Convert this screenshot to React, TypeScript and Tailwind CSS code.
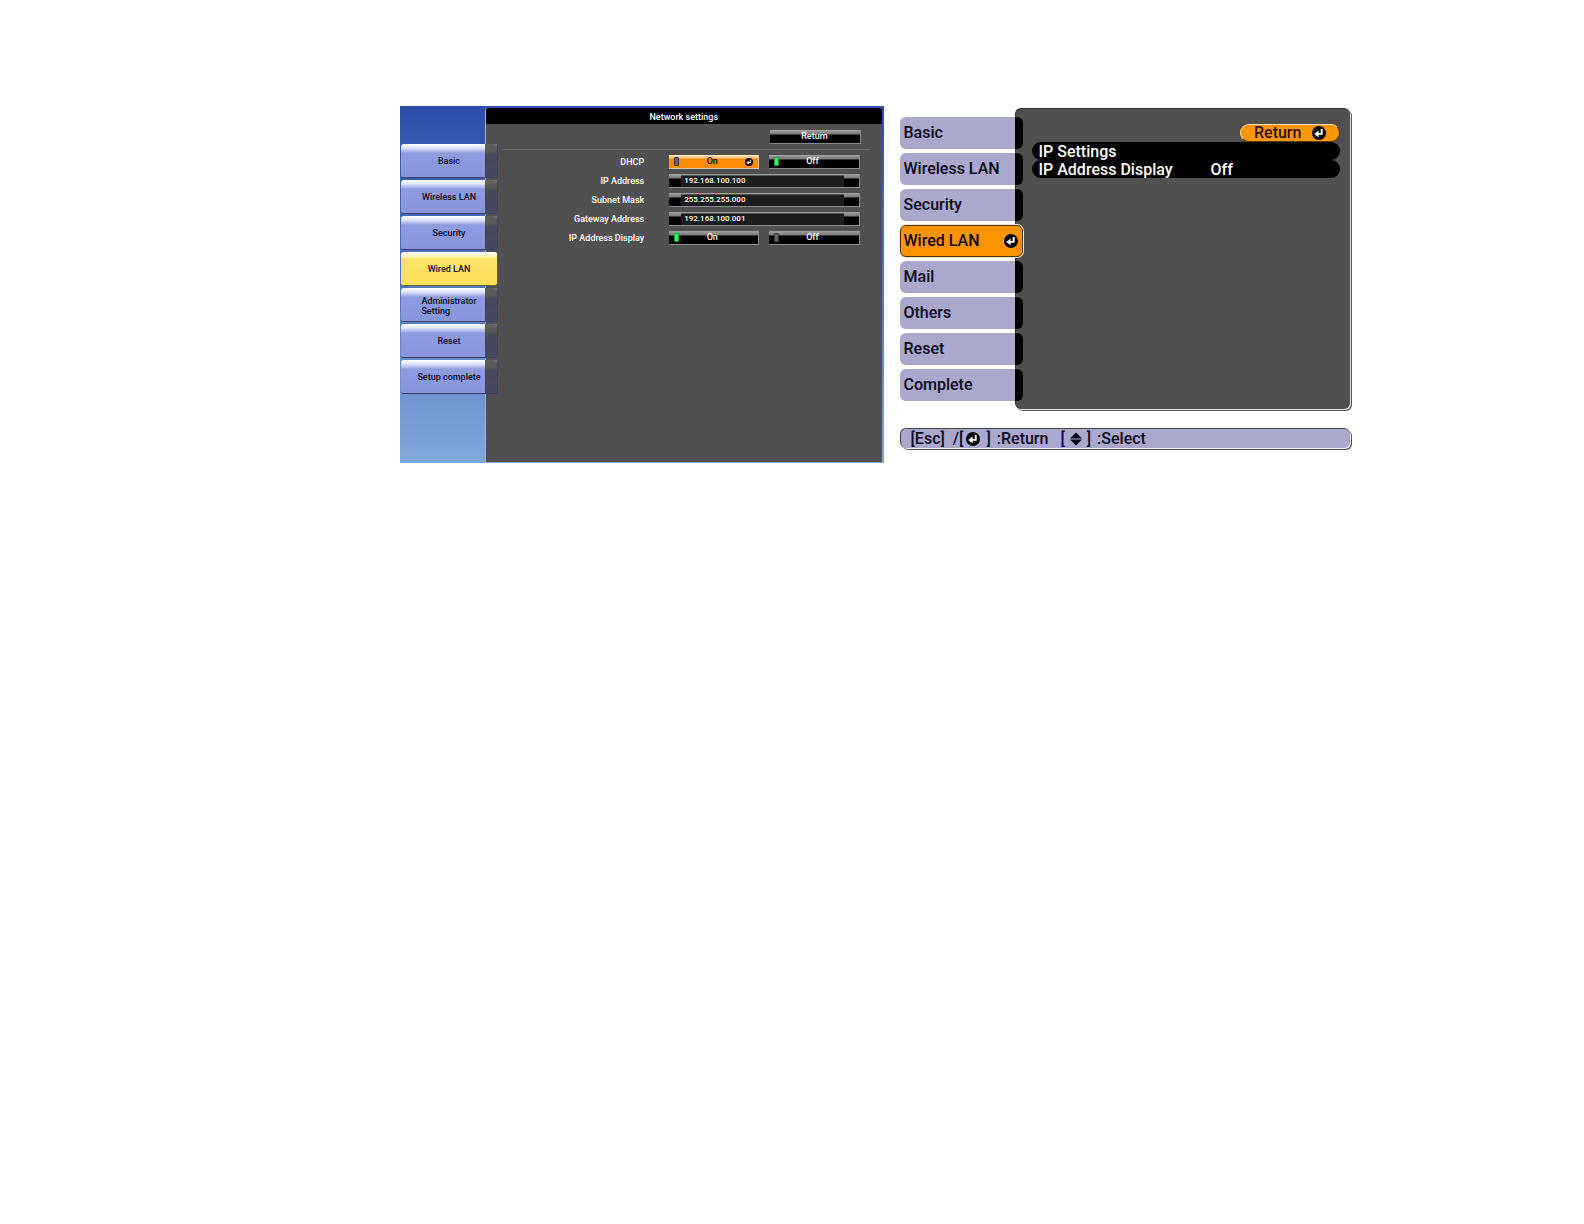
import clsx from "clsx";

type Tab = {
  label: string;
  sub?: string;
};

const projectorTabs: Tab[] = [
  { label: "Basic" },
  { label: "Wireless LAN" },
  { label: "Security" },
  { label: "Wired LAN" },
  { label: "Administrator", sub: "Setting" },
  { label: "Reset" },
  { label: "Setup complete" },
];

const menuTabs = [
  "Basic",
  "Wireless LAN",
  "Security",
  "Wired LAN",
  "Mail",
  "Others",
  "Reset",
  "Complete",
];

const addressFields = [
  { id: "ip", label: "IP Address", value: "192.168.100.100" },
  { id: "subnet", label: "Subnet Mask", value: "255.255.255.000" },
  { id: "gateway", label: "Gateway Address", value: "192.168.100.001" },
];

const glossy =
  "border-r border-b border-[#8c8c8c] bg-[linear-gradient(to_bottom,#a5a5a5_0px,#777_4px,#000_5px)]";

function EnterIcon({ className }: { className?: string }) {
  return (
    <svg viewBox="0 0 14 14" className={className} aria-hidden="true">
      <circle cx="7" cy="7" r="7" fill="#050505" />
      <path d="M9.7 3v4.9H5.5" fill="none" stroke="#fff" strokeWidth="1.9" />
      <path d="M2.2 7.9 6.6 4.6v6.6z" fill="#fff" />
    </svg>
  );
}

function UpDownIcon() {
  return (
    <svg viewBox="0 0 14 14" className="size-3.5" aria-hidden="true">
      <path d="M7 0.5 13 6.4H1z" fill="#080820" />
      <path d="M7 13.5 1 7.6h12z" fill="#080820" />
    </svg>
  );
}

type OptionProps = {
  name: string;
  label: string;
  checked?: boolean;
  focused?: boolean;
};

function Option({ name, label, checked, focused }: OptionProps) {
  return (
    <label
      className={clsx(
        "flex h-[14px] flex-1 items-center px-[5px] text-[9px] leading-none",
        focused
          ? "border-r border-b border-[#d8c9b0] bg-[linear-gradient(to_bottom,#fff0c8_0px,#f5c07a_3px,#ff8a0c_4px,#ff8a0c)] text-black"
          : clsx(glossy, "text-white"),
      )}
    >
      <input
        type="radio"
        name={name}
        defaultChecked={checked}
        className="h-[9px] w-[5px] appearance-none rounded-[1px] border border-[#333] bg-[#666] checked:border-[#0aa52a] checked:bg-[#3df25c]"
      />
      <span className="flex-1 text-center font-medium">{label}</span>
      {focused ? <EnterIcon className="size-2" /> : <span className="w-2" />}
    </label>
  );
}

type OptionRowProps = {
  name: string;
  label: string;
  value: "On" | "Off";
  focused?: boolean;
};

function OptionRow({ name, label, value, focused }: OptionRowProps) {
  return (
    <>
      <span id={name} className="text-right">
        {label}
      </span>
      <div role="radiogroup" aria-labelledby={name} className="flex gap-[10px]">
        <Option name={name} label="On" checked={value === "On"} focused={focused} />
        <Option name={name} label="Off" checked={value === "Off"} />
      </div>
    </>
  );
}

function ProjectorTab({ label, sub, active }: Tab & { active: boolean }) {
  return (
    <button
      type="button"
      className={clsx(
        "relative flex h-[34px] w-full items-center justify-center overflow-hidden rounded-[3px] border-r border-b pt-[2px] text-[9px] leading-[11px] font-medium text-[#0a0a28]",
        active
          ? "border-[#6b6330] bg-[linear-gradient(to_bottom,#fff_0px,#fff7c0_4px,#fde467_7px,#fbe05c)]"
          : "border-[#3c4168] bg-[linear-gradient(to_bottom,#fff_0px,#dfe4fb_4px,#909be0_9px,#8895dc)]",
      )}
    >
      {!active && (
        <span className="absolute inset-y-0 right-0 w-3 bg-[linear-gradient(to_bottom,#626262_0px,#555_8px,#47475a_11px,#474760)]" />
      )}
      <span className="text-left">
        {label}
        {sub && <span className="block leading-[9px]">{sub}</span>}
      </span>
    </button>
  );
}

function ProjectorPanel() {
  return (
    <section className="flex min-h-[357px] bg-linear-to-b from-[#2c50aa] via-[#5276bd] to-[#80a8da] pt-[2px] pr-[2px] pb-px">
      <nav className="relative z-10 w-[86px] shrink-0 pt-9 pl-px">
        <div className="flex w-[97px] flex-col gap-[2px]">
          {projectorTabs.map((tab) => (
            <ProjectorTab key={tab.label} {...tab} active={tab.label === "Wired LAN"} />
          ))}
        </div>
      </nav>

      <div className="flex-1 rounded-t-[3px] bg-[#505050] text-[9px] font-medium text-white shadow-[-1px_0_0_#a0b4da]">
        <h1 className="h-4 rounded-t-[3px] bg-black text-center leading-[18px]">
          Network settings
        </h1>
        <div className="flex justify-end pt-[6px] pr-[21px]">
          <button
            type="button"
            className={clsx(glossy, "h-[14px] w-[91px] leading-[13px]")}
          >
            Return
          </button>
        </div>
        <hr className="mt-[5px] mr-3 ml-4 border-[#6c6c6c]" />
        <form className="mt-[5px] grid grid-cols-[158fr_190fr] items-center gap-x-[25px] gap-y-[5px] pr-[22px] leading-[14px]">
          <OptionRow name="dhcp" label="DHCP" value="Off" focused />
          {addressFields.map(({ id, label, value }) => (
            <div key={id} className="contents">
              <label htmlFor={id} className="text-right">
                {label}
              </label>
              <div className={clsx(glossy, "flex h-[14px] pr-[15px] pl-3")}>
                <input
                  id={id}
                  defaultValue={value}
                  className="mt-px w-full min-w-0 border-t border-[#555] bg-[#1c1c1c] px-[3px] pb-[2px] text-[8px] leading-none text-white"
                />
              </div>
            </div>
          ))}
          <OptionRow name="ip-display" label="IP Address Display" value="On" />
        </form>
      </div>
    </section>
  );
}

function MenuTab({ label, active }: { label: string; active: boolean }) {
  return (
    <button
      type="button"
      className={clsx(
        "flex h-8 w-full items-center justify-between rounded-md pr-1 text-left text-[#080820]",
        active
          ? "border border-[#4a3510] bg-[#fe9400] pl-[3px] shadow-[0_0_0_1px_#f5e3c0]"
          : "bg-[linear-gradient(to_right,#aaa8cc_115px,#000_115px)] pl-1",
      )}
    >
      {label}
      {active && <EnterIcon className="size-3.5" />}
    </button>
  );
}

function MenuPanel() {
  return (
    <section className="pt-[2px] text-base leading-5 font-medium">
      <div className="flex">
        <nav className="relative z-10 w-[115px] shrink-0 pt-[9px]">
          <div className="flex w-[123px] flex-col gap-1">
            {menuTabs.map((label) => (
              <MenuTab key={label} label={label} active={label === "Wired LAN"} />
            ))}
          </div>
        </nav>

        <div className="mr-[2px] flex min-h-[301px] flex-1 flex-col rounded-md border-t border-l border-[#303030] bg-[#505050] pt-[15px] pr-[10px] pl-4 text-white shadow-[1px_1px_0_#e4e4e4,2px_2px_0_#555]">
          <button
            type="button"
            className="flex h-[18px] w-[100px] items-center justify-between self-end rounded-full border-t border-r border-b border-l border-t-[#ffd9a0] border-r-[#5a3a08] border-b-[#5a3a08] border-l-[#ffd9a0] bg-[#fe9400] px-[13px] text-[#2a1200]"
          >
            Return
            <EnterIcon className="size-3.5" />
          </button>
          <button
            type="button"
            className="flex h-[18px] items-start rounded-full bg-black pl-[7px]"
          >
            IP Settings
          </button>
          <button
            type="button"
            className="flex h-[18px] items-start rounded-full bg-black pl-[7px]"
          >
            <span className="w-[172px] text-left">IP Address Display</span>
            <span>Off</span>
          </button>
        </div>
      </div>

      <footer className="mt-[19px] mr-[2px] flex h-5 items-center rounded-md border-t border-l border-[#444] bg-[#aaa8cc] pl-[10px] text-[#080820] shadow-[1px_1px_0_#f0f0f0,2px_2px_0_#555]">
        <span>[Esc]</span>
        <span className="ml-2">/[</span>
        <EnterIcon className="mx-[3px] size-3.5" />
        <span className="ml-[3px]">]</span>
        <span className="ml-[6px]">:Return</span>
        <span className="mr-1 ml-3">[</span>
        <UpDownIcon />
        <span className="ml-1">]</span>
        <span className="ml-[6px]">:Select</span>
      </footer>
    </section>
  );
}

export default function App() {
  return (
    <main className="grid min-h-screen grid-cols-[483fr_452fr] items-start gap-4 bg-white pt-[106px] pr-[232px] pl-[400px] font-['Roboto','Liberation_Sans',sans-serif]">
      <ProjectorPanel />
      <MenuPanel />
    </main>
  );
}
